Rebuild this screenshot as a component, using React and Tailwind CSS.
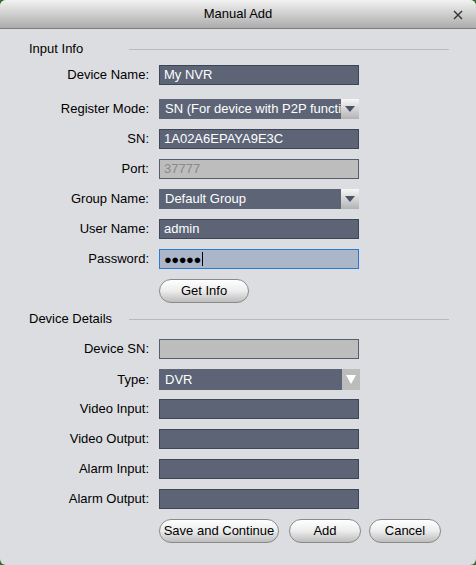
import React from "react";

const font = { fontFamily: '"Liberation Sans", Arial, sans-serif' };

function SectionHeader({ title, className }) {
  return (
    <div className={`flex h-[18px] items-center pl-[29px] ${className}`}>
      <span className="w-[100px] text-[13px] text-black">{title}</span>
      <span className="h-px w-[320px] bg-[#b8bac0]" />
    </div>
  );
}

function Row({ label, className, children }) {
  return (
    <div className={`flex items-center ${className}`}>
      <span className="w-[149px] text-right text-[13px] text-black">{label}</span>
      <div className="ml-[10px]">{children}</div>
    </div>
  );
}

function TextBox({ value, className = "" }) {
  return (
    <div
      className={`flex h-[20px] w-[200px] items-center border border-[#3e4557] bg-[#5c6476] px-[4px] text-[13px] text-white ${className}`}
    >
      {value}
    </div>
  );
}

function GrayBox({ value }) {
  return (
    <div className="flex h-[20px] w-[200px] items-center border border-[#555d70] bg-[#bdbdbd] px-[4px] text-[13px] text-[#8a8a8a]">
      {value}
    </div>
  );
}

function Select({ value }) {
  return (
    <div className="flex h-[20px] w-[200px] bg-[#5c6476]">
      <div className="flex flex-1 items-center overflow-hidden whitespace-nowrap px-[6px] text-[13px] text-white">
        {value}
      </div>
      <div className="flex w-[18px] items-center justify-center bg-gradient-to-b from-[#f7f7f7] to-[#b3b3b3]">
        <svg width="10" height="6" viewBox="0 0 10 6">
          <path d="M0 0 H10 L5 6 Z" fill="#4b5466" />
        </svg>
      </div>
    </div>
  );
}

function Button({ children, className = "" }) {
  return (
    <button
      className={`flex h-[24px] items-center justify-center rounded-full border border-[#8a8a8a] bg-gradient-to-b from-[#ffffff] via-[#ececec] to-[#bdbdbd] text-[13px] text-black ${className}`}
      style={font}
    >
      {children}
    </button>
  );
}

export default function App() {
  return (
    <div className="h-[565px] w-[476px] bg-[#3a6b33]" style={font}>
      <div className="flex h-full flex-col overflow-hidden rounded-[6px] bg-[#dcdde1]">
        <div className="relative flex h-[29px] items-center justify-center border-b border-[#7e7e7e] bg-gradient-to-b from-[#f2f2f2] to-[#acacac]">
          <span className="text-[13px] text-black">Manual Add</span>
          <svg className="absolute right-[13px] top-[10px]" width="10" height="10" viewBox="0 0 10 10">
            <path d="M1 1 L9 9 M9 1 L1 9" stroke="#333333" strokeWidth="1.4" />
          </svg>
        </div>

        <SectionHeader title="Input Info" className="mt-[11px]" />

        <Row label="Device Name:" className="mt-[7px]">
          <TextBox value="My NVR" />
        </Row>
        <Row label="Register Mode:" className="mt-[14px]">
          <Select value="SN (For device with P2P function)" />
        </Row>
        <Row label="SN:" className="mt-[10px]">
          <TextBox value="1A02A6EPAYA9E3C" />
        </Row>
        <Row label="Port:" className="mt-[10px]">
          <GrayBox value="37777" />
        </Row>
        <Row label="Group Name:" className="mt-[10px]">
          <Select value="Default Group" />
        </Row>
        <Row label="User Name:" className="mt-[10px]">
          <TextBox value="admin" />
        </Row>
        <Row label="Password:" className="mt-[10px]">
          <div className="flex h-[20px] w-[200px] items-center border border-[#2b7ad0] bg-[#abb7c8] px-[4px] text-black">
            <span className="text-[13px] leading-none tracking-[-0.5px]">●●●●●</span>
            <span className="ml-px h-[14px] w-px bg-black" />
          </div>
        </Row>
        <div className="mt-[10px] pl-[159px]">
          <Button className="w-[90px]">Get Info</Button>
        </div>

        <SectionHeader title="Device Details" className="mt-[7px]" />

        <Row label="Device SN:" className="mt-[11px]">
          <GrayBox value="" />
        </Row>
        <Row label="Type:" className="mt-[10px]">
          <div className="flex h-[21px] w-[201px] bg-[#5c6476]">
            <div className="flex flex-1 items-center px-[6px] text-[13px] text-white">DVR</div>
            <div className="flex w-[18px] items-center justify-center bg-[#bcbcbc]">
              <svg width="10" height="9" viewBox="0 0 10 9">
                <path d="M0 0 H10 L5 9 Z" fill="#ffffff" />
              </svg>
            </div>
          </div>
        </Row>
        <Row label="Video Input:" className="mt-[9px]">
          <TextBox value="" />
        </Row>
        <Row label="Video Output:" className="mt-[10px]">
          <TextBox value="" />
        </Row>
        <Row label="Alarm Input:" className="mt-[10px]">
          <TextBox value="" />
        </Row>
        <Row label="Alarm Output:" className="mt-[10px]">
          <TextBox value="" />
        </Row>

        <div className="mt-[10px] flex pl-[159px]">
          <Button className="w-[120px]">Save and Continue</Button>
          <Button className="ml-[10px] w-[72px]">Add</Button>
          <Button className="ml-[8px] w-[72px]">Cancel</Button>
        </div>
      </div>
    </div>
  );
}
